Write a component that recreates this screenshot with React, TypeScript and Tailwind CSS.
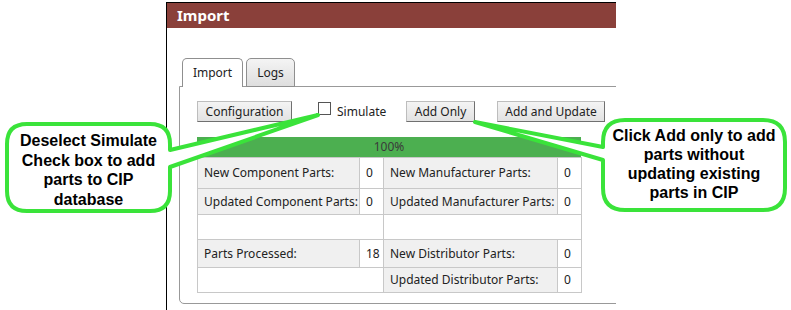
import React from "react";

const ui = { fontFamily: '"Noto Sans", "Open Sans", sans-serif' };
const callout = { fontFamily: '"Liberation Sans", Arial, sans-serif' };

function Btn({ w, children }: { w: string; children: React.ReactNode }) {
  return (
    <div
      className={`${w} h-[21px] flex items-center justify-center text-[12px] text-[#222] bg-gradient-to-b from-[#f4f4f4] to-[#e2e2e2] border border-[#bdbdbd] border-r-[#707070] border-b-[#707070]`}
    >
      {children}
    </div>
  );
}

export default function App() {
  const label = "bg-[#f0f0f0] border border-[#c8c8c8] pl-[6px] text-left font-normal";
  const val = "bg-white border border-[#c8c8c8] pl-[6px] text-left";
  return (
    <div className="relative w-[791px] h-[310px] bg-white overflow-hidden" style={ui}>
      <div className="ml-[166px] mt-[2px] w-[450px] h-[308px] border-l border-t border-black overflow-hidden flex flex-col">
        <div className="h-[25px] shrink-0 bg-[#8a403a] text-white font-bold text-[15px] pl-[10px] flex items-center">
          Import
        </div>
        <div className="pl-[12px] pt-[30px]">
          <div className="relative z-10 flex items-end pl-[3px] gap-[3px] -mb-px">
            <div className="w-[61px] h-[29px] border border-b-0 border-[#8f8f8f] rounded-t-[5px] bg-white flex items-center justify-center text-[12px] text-[#222] pb-[1px]">
              Import
            </div>
            <div className="w-[49px] h-[29px] border border-[#8f8f8f] rounded-t-[5px] bg-gradient-to-b from-[#f4f4f4] to-[#dedede] flex items-center justify-center text-[12px] text-[#222]">
              Logs
            </div>
          </div>
          <div className="w-[460px] h-[218px] border border-[#999] rounded-bl-[5px] pl-[17px] pt-[14px]">
            <div className="flex items-center h-[21px]">
              <Btn w="w-[95px]">Configuration</Btn>
              <div className="w-[114px] flex items-center">
                <div className="ml-[26px] w-[13px] h-[13px] border border-[#555] bg-white -mt-[6px]" />
                <span className="ml-[6px] text-[12px] text-[#222]">Simulate</span>
              </div>
              <Btn w="w-[69px]">Add Only</Btn>
              <div className="ml-[22px]">
                <Btn w="w-[108px]">Add and Update</Btn>
              </div>
            </div>
            <div className="mt-[15px] w-[384px] h-[20px] bg-[#4caf50] flex items-center justify-center text-[12px] text-[#3a3a3a]">
              100%
            </div>
            <table className="w-[384px] border-collapse text-[12px] text-[#222] table-fixed">
              <colgroup>
                <col className="w-[162px]" />
                <col className="w-[24px]" />
                <col className="w-[174px]" />
                <col className="w-[24px]" />
              </colgroup>
              <tbody>
                <tr className="h-[31px]">
                  <td className={label}>New Component Parts:</td>
                  <td className={val}>0</td>
                  <td className={label}>New Manufacturer Parts:</td>
                  <td className={val}>0</td>
                </tr>
                <tr className="h-[26px]">
                  <td className={label}>Updated Component Parts:</td>
                  <td className={val}>0</td>
                  <td className={label}>Updated Manufacturer Parts:</td>
                  <td className={val}>0</td>
                </tr>
                <tr className="h-[25px]">
                  <td className={val} colSpan={2}></td>
                  <td className={val} colSpan={2}></td>
                </tr>
                <tr className="h-[28px]">
                  <td className={label}>Parts Processed:</td>
                  <td className={val}>18</td>
                  <td className={label}>New Distributor Parts:</td>
                  <td className={val}>0</td>
                </tr>
                <tr className="h-[25px]">
                  <td className={val} colSpan={2}></td>
                  <td className={label}>Updated Distributor Parts:</td>
                  <td className={val}>0</td>
                </tr>
              </tbody>
            </table>
          </div>
        </div>
      </div>

      <svg className="absolute left-0 top-0 pointer-events-none" width="791" height="310">
        <path
          d="M27,124 H150 Q170,124 170,144 V150 L318,115 L170,167 V191 Q170,211 150,211 H27 Q7,211 7,191 V144 Q7,124 27,124 Z"
          fill="white"
          stroke="#3ae33a"
          strokeWidth="4"
          strokeLinejoin="round"
        />
        <path
          d="M625,120 H763 Q785,120 785,142 V188 Q785,210 763,210 H625 Q603,210 603,188 V160 L475,122 L603,147 V142 Q603,120 625,120 Z"
          fill="white"
          stroke="#3ae33a"
          strokeWidth="4"
          strokeLinejoin="round"
        />
      </svg>

      <div
        className="absolute left-[7px] top-[131px] w-[163px] text-center font-bold text-[16px] leading-[19.5px] text-black"
        style={callout}
      >
        Deselect Simulate
        <br />
        Check box to add
        <br />
        parts to CIP
        <br />
        database
      </div>
      <div
        className="absolute left-[603px] top-[126px] w-[182px] text-center font-bold text-[16px] leading-[19px] text-black"
        style={callout}
      >
        Click Add only to add
        <br />
        parts without
        <br />
        updating existing
        <br />
        parts in CIP
      </div>
    </div>
  );
}
